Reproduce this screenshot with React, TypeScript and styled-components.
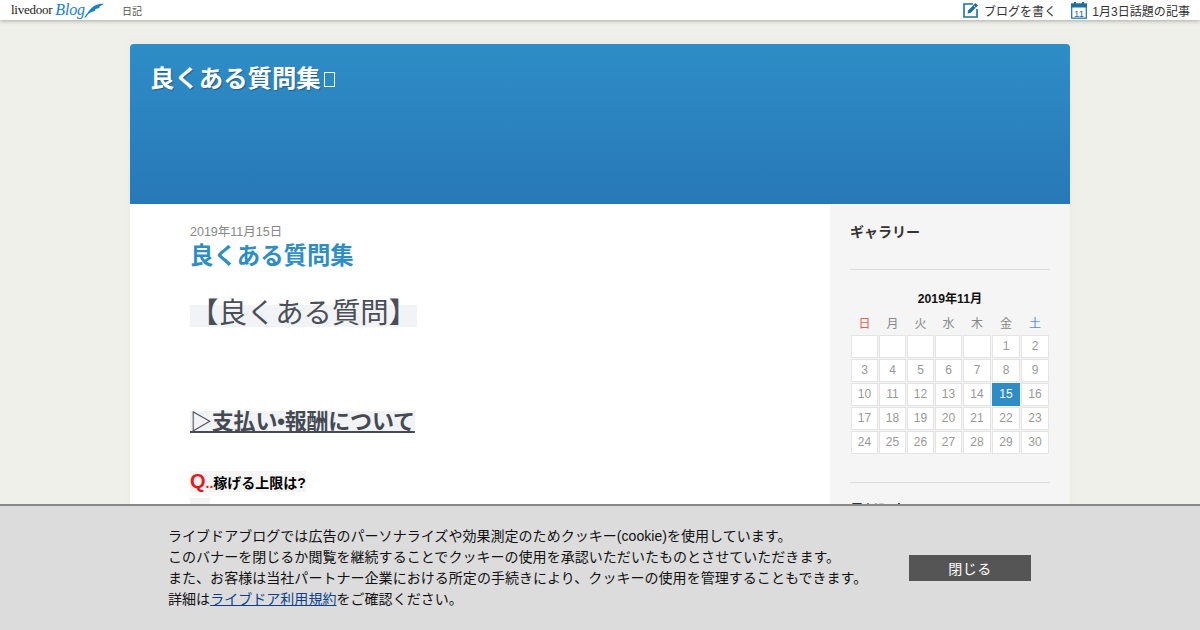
import React from "react";
import styled, { createGlobalStyle } from "styled-components";

const Global = createGlobalStyle`
  html, body { margin: 0; padding: 0; height: 630px; overflow: hidden; background: #f0f0eb; }
  body { font-family: "Liberation Sans", "Noto Sans CJK JP", sans-serif; color: #333; }
  * { box-sizing: border-box; }
`;

const TopBar = styled.div`
  position: relative; z-index: 2;
  height: 20px; background: #fff; box-shadow: 0 1px 4px rgba(0,0,0,.3);
  display: flex; align-items: center; padding: 0 10px 0 11px;
`;
const Logo = styled.div`display: flex; align-items: center; width: 111px; height: 20px;`;
const LogoWord = styled.span`
  font-family: "Liberation Serif", serif; font-size: 13px; color: #222; letter-spacing: -.25px; margin-right: 3px;
`;
const LogoBlog = styled.span`
  font-family: "Liberation Serif", serif; font-style: italic; font-size: 16px; color: #1a80c8; line-height: 20px; letter-spacing: -.2px;
`;
const TopCat = styled.span`font-size: 10px; color: #555;`;
const TopRight = styled.div`margin-left: auto; display: flex; align-items: center; gap: 15px;`;
const TopLink = styled.span`display: flex; align-items: center; gap: 5px; font-size: 12px; letter-spacing: .05px; color: #333; white-space: nowrap;`;

const Page = styled.div`width: 940px; margin: 24px auto 0; box-shadow: 0 0 12px rgba(0,0,0,.04);`;
const Header = styled.header`
  height: 160px; border-radius: 4px 4px 0 0; padding: 18px 20px;
  background: linear-gradient(#2e8dc6, #2778b7);
`;
const BlogTitle = styled.h1`
  margin: 0; font-size: 24.4px; line-height: 34px; font-weight: bold; color: #fff;
  text-shadow: 1px 1px 1px rgba(0,0,0,.3); display: flex; align-items: center;
`;
const Tofu = styled.span`
  display: inline-block; width: 11px; height: 15px; border: 1px solid #fff; margin-left: 3px;
`;
const Columns = styled.div`display: flex; height: 426px; overflow: hidden;`;
const Main = styled.main`width: 700px; background: #fff; padding: 21px 60px 0;`;
const DateLine = styled.div`font-size: 12.5px; line-height: 14px; color: #888;`;
const PostTitle = styled.h2`margin: 0; font-size: 23.4px; line-height: 34px; font-weight: bold; color: #2e8dc5;`;
const Big = styled.div`margin-top: 17px; height: 37px; display: flex; align-items: flex-end;`;
const BigMark = styled.span`
  font-size: 28.4px; line-height: 16px; padding-bottom: 6px; color: #4a4f57; background: #f1f3f6; display: inline-block;
  white-space: nowrap;
`;
const Section = styled.div`margin-top: 84px; height: 37px; display: flex;`;
const SectionText = styled.span`
  align-self: flex-start; font-size: 22px; line-height: 22px; font-weight: bold; color: #454a52; letter-spacing: -.2px;
  background: #f1f3f6; text-decoration: underline; text-decoration-thickness: 2px; text-underline-offset: 2px; white-space: nowrap;
`;
const QLine = styled.div`margin-top: 23px; display: flex;`;
const QMark = styled.span`
  display: inline-flex; align-items: baseline; background: #f5f5f5; height: 21px; line-height: 21px;
  font-size: 14px; font-weight: bold; color: #000; white-space: nowrap;
`;
const QRed = styled.span`color: #e8161c; font-size: 20px; line-height: 20px;`;
const QDots = styled.span`color: #e8161c; font-size: 14px;`;
const QStub = styled.div`margin-top: 6px; width: 20px; height: 10px; background: #f3f3f3;`;

const Side = styled.aside`width: 240px; background: #f5f5f5; padding: 20px 20px 0;`;
const SideHead = styled.h3<{ $top?: number }>`
  margin: ${p => p.$top ?? 0}px 0 0; font-size: 14px; line-height: 17px; font-weight: bold; color: #333;
`;
const Rule = styled.hr<{ $top: number }>`
  margin: ${p => p.$top}px 0 0; border: 0; border-top: 1px solid #ddd;
`;
const CalTitle = styled.div`margin-top: 22px; text-align: center; font-size: 12.2px; line-height: 14px; font-weight: bold; color: #111;`;
const CalGrid = styled.div`
  margin: 5px 0 0 1px; display: grid;
  grid-template-columns: repeat(4, 27px) repeat(3, 28px);
  grid-auto-rows: 23px; column-gap: 1px; row-gap: 1px;
`;
const Dow = styled.div<{ $c: string }>`
  font-size: 12px; line-height: 14px; padding-top: 2px; text-align: center; color: ${p => p.$c}; align-self: center;
`;
const Day = styled.div<{ $on?: boolean }>`
  font-size: 12px; line-height: 21px; text-align: center;
  border: 1px solid ${p => (p.$on ? "#2e8dc5" : "#e4e4e4")};
  background: ${p => (p.$on ? "#2e8dc5" : "#fff")};
  color: ${p => (p.$on ? "#fff" : "#999")};
`;

const Banner = styled.div`
  position: fixed; left: 0; right: 0; bottom: 0; height: 126px; z-index: 5;
  background: #dcdcdc; border-top: 2px solid #8a8a8a;
  display: flex; padding: 20px 0 0 168px;
`;
const BannerText = styled.p`margin: 0; width: 741px; font-size: 14px; letter-spacing: .04px; line-height: 21px; color: #111; white-space: nowrap;`;
const BannerLink = styled.a`color: #0b3f8c; text-decoration: underline;`;
const CloseBtn = styled.button`
  margin: 29px 0 0 0; width: 122px; height: 26px; border: 0; background: #555; color: #fff;
  font: 14px "Liberation Sans", "Noto Sans CJK JP", sans-serif; letter-spacing: .5px;
`;

const PenIcon = () => (
  <svg width="16" height="16" viewBox="0 0 16 16" fill="none">
    <path d="M10 2H1v13h13V7" stroke="#1d6f9f" strokeWidth="1.6" />
    <path d="M4.500 11.500l.8-3.300L12.500 1l2.500 2.500-7.200 7.200z" fill="#1d6f9f" />
    <path d="M11 4l1.500 1.500" stroke="#fff" strokeWidth=".8" />
  </svg>
);
const CalIcon = () => (
  <svg width="16" height="17" viewBox="0 0 16 17" fill="none">
    <rect x=".7" y="2.200" width="14.600" height="14" fill="#fff" stroke="#1d6f9f" strokeWidth="1.200" />
    <rect x="0" y="1.500" width="16" height="4" fill="#1d6f9f" />
    <rect x="3" y="0" width="2" height="3" fill="#1d6f9f" />
    <rect x="11" y="0" width="2" height="3" fill="#1d6f9f" />
    <text x="8" y="14.500" textAnchor="middle" fontSize="9.500" fontFamily="Liberation Sans, sans-serif" fill="#1d6f9f">11</text>
  </svg>
);
const Feather = () => (
  <svg width="20" height="15" viewBox="0 0 20 15" style={{ marginLeft: -1 }}>
    <path d="M0 14.500C4 10 6 5 11 2.500 14 1 17 .5 20 .8 18 2.500 17 3 15 3.500 16 4 16 4 15 5 13 5.500 12 6 11 6.500 12 7 11 8 9 8.500 6 9 4 11 1.500 14.500z" fill="#1a80c8" />
  </svg>
);

const weeks = [
  ["", "", "", "", "", "1", "2"],
  ["3", "4", "5", "6", "7", "8", "9"],
  ["10", "11", "12", "13", "14", "15", "16"],
  ["17", "18", "19", "20", "21", "22", "23"],
  ["24", "25", "26", "27", "28", "29", "30"],
];
const dows: [string, string][] = [["日", "#e0605a"], ["月", "#888"], ["火", "#888"], ["水", "#888"], ["木", "#888"], ["金", "#888"], ["土", "#5b8de0"]];

export default function App() {
  return (
    <>
      <Global />
      <TopBar>
        <Logo>
          <LogoWord>livedoor</LogoWord>
          <LogoBlog>Blog</LogoBlog>
          <Feather />
        </Logo>
        <TopCat>日記</TopCat>
        <TopRight>
          <TopLink><PenIcon />ブログを書く</TopLink>
          <TopLink><CalIcon />1月3日話題の記事</TopLink>
        </TopRight>
      </TopBar>
      <Page>
        <Header>
          <BlogTitle>良くある質問集<Tofu /></BlogTitle>
        </Header>
        <Columns>
          <Main>
            <DateLine>2019年11月15日</DateLine>
            <PostTitle>良くある質問集</PostTitle>
            <Big><BigMark>【良くある質問】</BigMark></Big>
            <Section><SectionText>▷支払い•報酬について</SectionText></Section>
            <QLine><QMark><QRed>Q</QRed><QDots>..</QDots>稼げる上限は?</QMark></QLine>
            <QStub />
          </Main>
          <Side>
            <SideHead>ギャラリー</SideHead>
            <Rule $top={28} />
            <CalTitle>2019年11月</CalTitle>
            <CalGrid>
              {dows.map(([d, c]) => <Dow key={d} $c={c}>{d}</Dow>)}
              {weeks.flat().map((d, i) => <Day key={i} $on={d === "15"}>{d}</Day>)}
            </CalGrid>
            <Rule $top={28} />
            <SideHead $top={19}>最新記事</SideHead>
          </Side>
        </Columns>
      </Page>
      <Banner>
        <BannerText>
          ライブドアブログでは広告のパーソナライズや効果測定のためクッキー(cookie)を使用しています。<br />
          このバナーを閉じるか閲覧を継続することでクッキーの使用を承認いただいたものとさせていただきます。<br />
          また、お客様は当社パートナー企業における所定の手続きにより、クッキーの使用を管理することもできます。<br />
          詳細は<BannerLink>ライブドア利用規約</BannerLink>をご確認ください。
        </BannerText>
        <CloseBtn>閉じる</CloseBtn>
      </Banner>
    </>
  );
}
